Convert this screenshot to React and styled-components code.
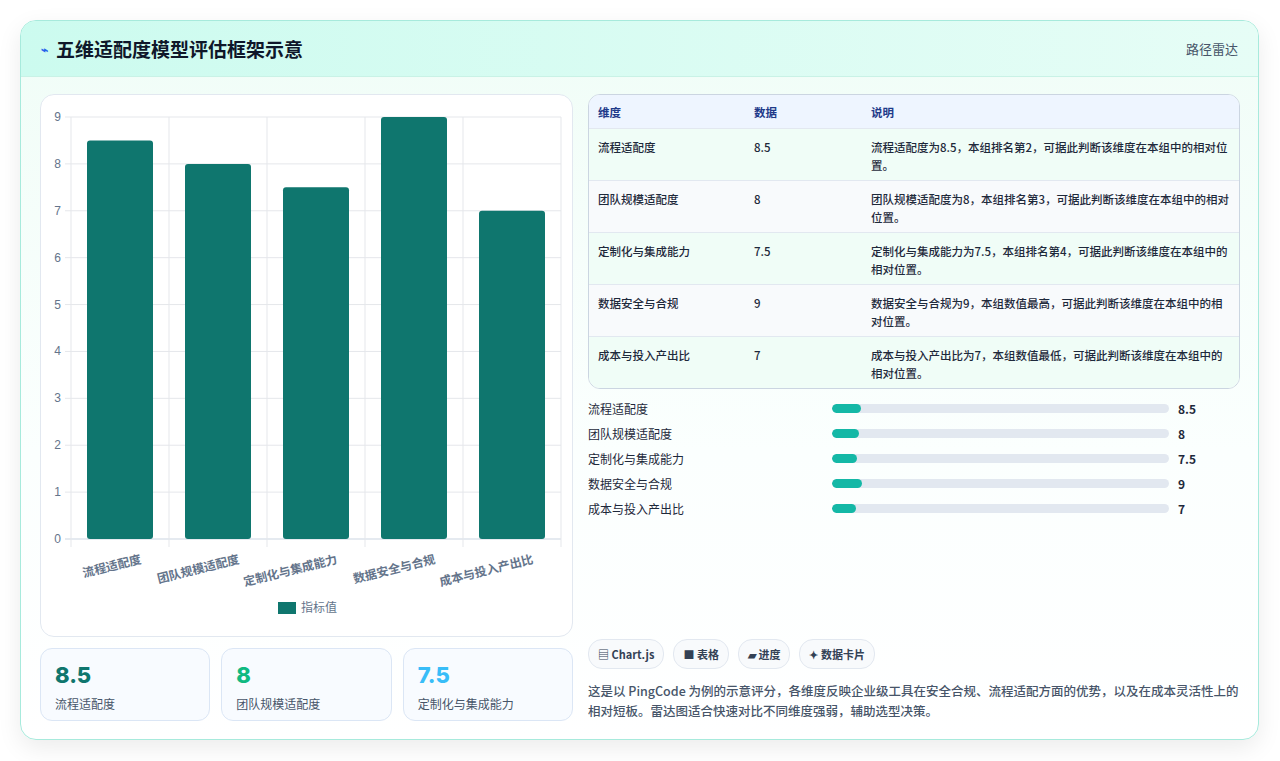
import React from "react";
import styled, { createGlobalStyle } from "styled-components";

const G = createGlobalStyle`
  body{margin:0;background:#f3f4f6;font-family:"Noto Sans CJK SC","Noto Sans",sans-serif;}
`;
const data = [
  { n: "流程适配度", v: 8.5, d: "流程适配度为8.5，本组排名第2，可据此判断该维度在本组中的相对位置。" },
  { n: "团队规模适配度", v: 8, d: "团队规模适配度为8，本组排名第3，可据此判断该维度在本组中的相对位置。" },
  { n: "定制化与集成能力", v: 7.5, d: "定制化与集成能力为7.5，本组排名第4，可据此判断该维度在本组中的相对位置。" },
  { n: "数据安全与合规", v: 9, d: "数据安全与合规为9，本组数值最高，可据此判断该维度在本组中的相对位置。" },
  { n: "成本与投入产出比", v: 7, d: "成本与投入产出比为7，本组数值最低，可据此判断该维度在本组中的相对位置。" },
];
const Page = styled.div`padding:20px 21px 21px 20px;height:761px;box-sizing:border-box;background:#fff;`;
const Card = styled.div`border:1px solid #a7eadc;border-radius:16px;overflow:hidden;height:720px;box-sizing:border-box;
  background:linear-gradient(180deg,#f0fdf7,#fbfffe 60%,#fff);box-shadow:0 8px 24px rgba(0,0,0,.08);`;
const Header = styled.div`height:55px;display:flex;align-items:center;justify-content:space-between;padding:0 20px;
  background:linear-gradient(90deg,#ccfbef,#e6fdf6);border-bottom:1px solid #c9f2e6;`;
const Title = styled.h1`margin:0;font-size:19px;font-weight:700;color:#0f172a;display:flex;align-items:center;gap:8px;`;
const Tag = styled.span`font-size:13px;color:#475569;`;
const Body = styled.div`display:grid;grid-template-columns:533px 652px;gap:15px;padding:17px 18px 0 19px;`;
const Col = styled.div`display:flex;flex-direction:column;`;
const ChartCard = styled.div`height:543px;border:1px solid #e2e8f0;border-radius:14px;background:#fff;box-sizing:border-box;`;
const Stats = styled.div`display:grid;grid-template-columns:repeat(3,1fr);gap:11px;margin-top:11px;`;
const Stat = styled.div`height:73px;border:1px solid #dbe6f5;border-radius:12px;background:#f8fbff;padding:12px 14px;box-sizing:border-box;`;
const Num = styled.div`font-size:22px;font-weight:800;color:${p=>p.c};line-height:28px;font-family:Inter,"Noto Sans",sans-serif;`;
const Lbl = styled.div`font-size:12px;color:#475569;margin-top:6px;`;
const Table = styled.div`border:1px solid #cbd5e1;border-radius:12px;overflow:hidden;background:#fff;`;
const Row = styled.div`display:grid;grid-template-columns:156px 117px 1fr;padding:0 9px;font-size:11.5px;color:#1e293b;
  background:${p=>p.h?"#eef5ff":p.alt?"#f8fafc":"#f0fdf7"};border-top:${p=>p.h?"none":"1px solid #e2e8f0"};
  min-height:${p=>p.h?33:52}px;align-items:${p=>p.h?"center":"start"};font-weight:${p=>p.h?600:500};
  ${p=>p.h?"color:#1e3a8a;":"padding-top:9px;box-sizing:border-box;"} line-height:18px;`;
const Bars = styled.div`display:flex;flex-direction:column;gap:7px;margin-top:10px;`;
const BarRow = styled.div`display:grid;grid-template-columns:244px 337px 1fr;align-items:center;gap:0;font-size:12px;color:#1e293b;height:18px;`;
const Track = styled.div`height:9px;background:#e2e8f0;border-radius:5px;overflow:hidden;`;
const Fill = styled.div`height:100%;background:#14b8a6;border-radius:5px;`;
const Val = styled.span`font-weight:700;padding-left:9px;font-size:12px;`;
const Chips = styled.div`display:flex;gap:9px;margin-top:auto;`;
const Chip = styled.span`border:1px solid #e2e8f0;border-radius:14px;padding:0 9px;height:28px;display:flex;align-items:center;
  font-size:11px;font-weight:600;color:#334155;background:#f8fafc;`;
const Desc = styled.p`margin:12px 0 0;font-size:12.5px;line-height:20px;color:#475569;font-weight:500;`;

function Chart() {
  const top = 22, bot = 444, left = 30, w = 490, cw = w / 5;
  const y = v => bot - (v / 9) * (bot - top);
  return (
    <svg width="533" height="543" style={{display:"block"}}>
      {Array.from({length:10},(_,i)=>(
        <g key={i}>
          <line x1={left-6} x2={left+w} y1={y(i)} y2={y(i)} stroke={i===0?"#cbd5e1":"#e5e7eb"} />
          <text x={left-10} y={y(i)+4} fontSize="12" fill="#64748b" textAnchor="end" fontFamily="Liberation Sans">{i}</text>
        </g>))}
      {Array.from({length:6},(_,i)=>(<line key={i} x1={left+i*cw} x2={left+i*cw} y1={top} y2={bot+8} stroke="#e5e7eb"/>))}
      {data.map((d,i)=>(
        <g key={i}>
          <rect x={left+i*cw+16} y={y(d.v)} width={cw-32} height={bot-y(d.v)} rx="3" fill="#0f766e"/>
          <text transform={`translate(${left+i*cw+cw/2+22},${bot+24}) rotate(-14)`} fontSize="12" fontWeight="600" fill="#64748b" textAnchor="end">{d.n}</text>
        </g>))}
      <rect x="237" y="507" width="18" height="12" fill="#0f766e"/>
      <text x="260" y="517" fontSize="12" fill="#64748b">指标值</text>
    </svg>);
}

export default function App(){
  return (<Page><G/><Card>
    <Header><Title><span style={{fontSize:12,color:"#2563eb"}}>⌁</span>五维适配度模型评估框架示意</Title><Tag>路径雷达</Tag></Header>
    <Body>
      <Col>
        <ChartCard><Chart/></ChartCard>
        <Stats>
          <Stat><Num c="#0f766e">8.5</Num><Lbl>流程适配度</Lbl></Stat>
          <Stat><Num c="#10b981">8</Num><Lbl>团队规模适配度</Lbl></Stat>
          <Stat><Num c="#38bdf8">7.5</Num><Lbl>定制化与集成能力</Lbl></Stat>
        </Stats>
      </Col>
      <Col>
        <Table>
          <Row h><span>维度</span><span>数据</span><span>说明</span></Row>
          {data.map((d,i)=>(<Row key={i} alt={i%2===1}><span>{d.n}</span><span>{d.v}</span><span>{d.d}</span></Row>))}
        </Table>
        <Bars>{data.map((d,i)=>(<BarRow key={i}><span>{d.n}</span><Track><Fill style={{width:`${d.v}%`}}/></Track><Val>{d.v}</Val></BarRow>))}</Bars>
        <Chips><Chip>▤ Chart.js</Chip><Chip>■ 表格</Chip><Chip>▰ 进度</Chip><Chip>✦ 数据卡片</Chip></Chips>
        <Desc>这是以 PingCode 为例的示意评分，各维度反映企业级工具在安全合规、流程适配方面的优势，以及在成本灵活性上的相对短板。雷达图适合快速对比不同维度强弱，辅助选型决策。</Desc>
      </Col>
    </Body>
  </Card></Page>);
}
